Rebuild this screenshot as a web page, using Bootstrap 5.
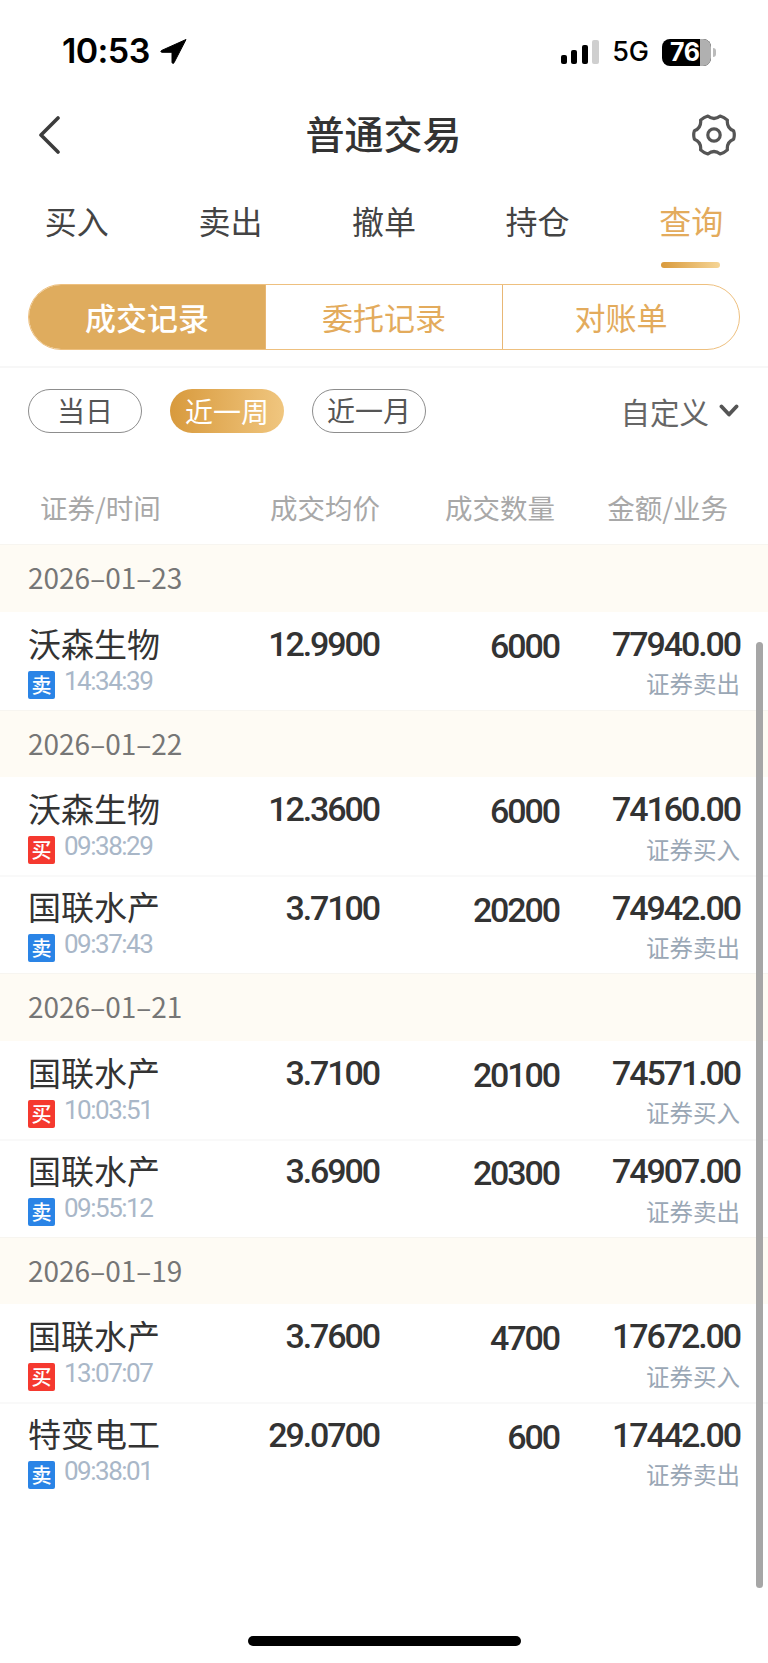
<!DOCTYPE html>
<html lang="zh-CN">
<head>
<meta charset="utf-8">
<title>普通交易</title>
<link href="https://cdn.jsdelivr.net/npm/bootstrap@5.3.0/dist/css/bootstrap.min.css" rel="stylesheet">
<style>
:root{--gold:#e3ab5c}
html,body{height:100%}
body{font-family:"Noto Sans CJK SC",sans-serif;color:#333;background:#fff;overflow:hidden}
.phone{position:relative;width:768px;height:1663px;overflow:hidden;background:#fff}
.statusbar{height:100px;padding:36px 52px 0 62px;align-items:flex-start}
.clock{font:600 34px/30px "Inter",sans-serif;color:#000;letter-spacing:-.6px}
.clock-wrap{gap:10px}
.net{font:500 27px/32px "Inter",sans-serif;color:#000;margin:0 13px}
.batt{position:relative;width:49px;height:27px;border-radius:8px;background:#000;color:#fff;font:700 25px/27px "Inter",sans-serif;padding-left:8px;letter-spacing:-.4px}
.batt-rest{position:absolute;left:38px;top:0;bottom:0;right:0;background:#b0b0b0;border-radius:0 8px 8px 0}
.batt-num{position:relative}
.batt-nub{width:3px;height:9px;margin-left:2px;background:#bbb;border-radius:0 3px 3px 0}
.topbar{height:70px;padding:0 32px 0 38px}
.bar-left{width:56px}
.bar-right{width:63px}
.page-title{font-size:39px;font-weight:500;line-height:50px;color:#333;margin:0 0 6px}
.tabbar{height:114px}
.tab-cell{flex:1 1 0;text-align:center;font-size:32px;line-height:44px;color:#444;padding-top:28px;position:relative}
.tab-cell.on{color:var(--gold)}
.tab-cell.on::after{content:"";position:absolute;left:50%;margin-left:-30px;width:59px;height:6px;top:92px;border-radius:3px;background:linear-gradient(90deg,#d99a3c,#f5d596)}
.seg{margin:0 28px;height:66px;border:1.5px solid #eec07f;border-radius:33px;overflow:hidden}
.seg-item{flex:1 1 0;display:flex;align-items:center;justify-content:center;font-size:31px;color:var(--gold);border-left:1.5px solid #e8b775}
.seg-item:first-child{border-left:0;background:#dfac5e;color:#fff;font-weight:500}
.rule{height:2px;background:#f7f7f7;margin-top:16px}
.filters{padding:21px 28px 0;height:77px}
.pill{width:114px;height:44px;border:1.5px solid #8d8d8d;border-radius:22px;font-size:28px;line-height:41px;text-align:center;color:#555;margin-right:28px}
.pill.on{border:0;line-height:44px;color:#fff;background:linear-gradient(90deg,#d89a3d,#f0c67f)}
.custom-wrap{gap:10px;margin-right:1px}
.custom{font-size:29.500px;line-height:44px;color:#666}
.table-head{display:grid;grid-template-columns:150px 190px 175px 173px;height:99px;padding:26px 0 0 40px;font-size:27.500px;color:#a8a8a8;align-items:center;white-space:nowrap}
.date-row{height:67.500px;background:#fefbf4;padding-left:28px;font-size:28px;line-height:65px;color:#767676;border-top:1px solid #f7f5f0}
.trade-row{display:grid;grid-template-columns:180px 171px 180px 181px;height:98px;padding:0 28px;border-top:2px solid #f9f9f9}
.date-row + .trade-row{border-top:0}
.who{padding-top:11px;white-space:nowrap}
.trade-row:not(.date-row + .trade-row) .who{padding-top:9px}
.who-name{font-size:33px;line-height:40px;color:#333}
.who-sub{margin-top:8px;height:28px}
.side{width:27px;height:28px;border-radius:2px;color:#fff;font-size:20px;line-height:28px;text-align:center;font-weight:500}
.side.b{background:#f5392f}
.side.s{background:#2a84e6}
.stamp{font:400 26px/20px "Roboto",sans-serif;color:#a9b7c8;margin-left:9px;letter-spacing:-1.500px}
.num-val{font:500 34px/40px "Roboto",sans-serif;color:#333;text-align:right;padding-top:12px;letter-spacing:-2.100px}
.num-val.qty{padding-top:14px}
.trade-row:not(.date-row + .trade-row) .num-val{padding-top:10.500px}
.trade-row:not(.date-row + .trade-row) .num-val.qty{padding-top:12.500px}
.money-kind{font-size:23.500px;line-height:30px;color:#9aa7b5;text-align:right;padding-top:4.500px;white-space:nowrap}
.scroller{position:absolute;left:756px;top:642px;width:7px;height:946px;border-radius:4px;background:#a6a6a6}
.home-bar{position:absolute;left:248px;top:1636px;width:273px;height:10px;border-radius:5px;background:#000}
</style>
</head>
<body>
<div class="phone">
  <div class="statusbar d-flex justify-content-between">
    <div class="clock-wrap d-flex align-items-center">
      <span class="clock">10:53</span>
      <svg width="27" height="27" viewBox="0 0 27 27"><path d="M26 1.500 1.500 12.500c-1 .5-.7 1.800.4 1.800H12v10c0 1.200 1.500 1.500 2 .5L26 1.500Z" fill="#000" stroke="#000" stroke-linejoin="round"/></svg>
    </div>
    <div class="d-flex align-items-center">
      <svg width="38" height="25" viewBox="0 0 38 25"><rect x="0" y="15" width="6" height="9" rx="2"/><rect x="10" y="10" width="6" height="14" rx="2"/><rect x="21" y="5" width="6" height="19" rx="2"/><rect x="31" y="0" width="7" height="24" rx="2" fill="#cfcfcf"/></svg>
      <span class="net">5G</span>
      <div class="batt"><span class="batt-rest"></span><span class="batt-num">76</span></div>
      <span class="batt-nub"></span>
    </div>
  </div>

  <nav class="topbar d-flex align-items-center justify-content-between">
    <div class="bar-left d-flex"><svg width="22" height="38" viewBox="0 0 22 38"><path d="M20 2 3 19l17 17" fill="none" stroke="#3c3c3c" stroke-width="3.600" stroke-linecap="round" stroke-linejoin="round"/></svg></div>
    <h1 class="page-title">普通交易</h1>
    <div class="bar-right d-flex justify-content-end"><svg width="44" height="42" viewBox="0 0 44 42"><path d="M41.600 16.800Q43 21 41.600 25.200Q34.500 28 35.400 35.900Q32 39 28.200 40Q22 35 15.800 40Q12 39 8.600 35.900Q9.500 28 2.400 25.200Q1 21 2.400 16.800Q9.500 14 8.600 6.100Q12 3 15.800 2Q22 7 28.200 2Q32 3 35.400 6.100Q34.500 14 41.600 16.800Z" fill="none" stroke="#555" stroke-width="3.200" stroke-linejoin="round"/><circle cx="22" cy="21" r="6.200" fill="none" stroke="#555" stroke-width="3.200"/></svg></div>
  </nav>

  <div class="tabbar d-flex">
    <div class="tab-cell">买入</div>
    <div class="tab-cell">卖出</div>
    <div class="tab-cell">撤单</div>
    <div class="tab-cell">持仓</div>
    <div class="tab-cell on">查询</div>
  </div>

  <div class="seg d-flex">
    <div class="seg-item">成交记录</div>
    <div class="seg-item">委托记录</div>
    <div class="seg-item">对账单</div>
  </div>
  <div class="rule"></div>

  <div class="filters d-flex align-items-start">
    <div class="pill">当日</div>
    <div class="pill on">近一周</div>
    <div class="pill">近一月</div>
    <div class="custom-wrap ms-auto d-flex align-items-center">
      <span class="custom">自定义</span>
      <svg width="20" height="14" viewBox="0 0 20 14"><path d="M2.500 2.500 10 10.500l7.500-8" fill="none" stroke="#555" stroke-width="3.800" stroke-linecap="round" stroke-linejoin="round"/></svg>
    </div>
  </div>

  <div class="table-head">
    <div>证券/时间</div>
    <div class="text-end">成交均价</div>
    <div class="text-end">成交数量</div>
    <div class="text-end">金额/业务</div>
  </div>

  <div class="date-row">2026–01–23</div>
  <div class="trade-row">
    <div class="who"><div class="who-name">沃森生物</div><div class="who-sub d-flex"><span class="side s">卖</span><span class="stamp">14:34:39</span></div></div>
    <div class="num-val">12.9900</div>
    <div class="num-val qty">6000</div>
    <div><div class="num-val">77940.00</div><div class="money-kind">证券卖出</div></div>
  </div>

  <div class="date-row">2026–01–22</div>
  <div class="trade-row">
    <div class="who"><div class="who-name">沃森生物</div><div class="who-sub d-flex"><span class="side b">买</span><span class="stamp">09:38:29</span></div></div>
    <div class="num-val">12.3600</div>
    <div class="num-val qty">6000</div>
    <div><div class="num-val">74160.00</div><div class="money-kind">证券买入</div></div>
  </div>
  <div class="trade-row">
    <div class="who"><div class="who-name">国联水产</div><div class="who-sub d-flex"><span class="side s">卖</span><span class="stamp">09:37:43</span></div></div>
    <div class="num-val">3.7100</div>
    <div class="num-val qty">20200</div>
    <div><div class="num-val">74942.00</div><div class="money-kind">证券卖出</div></div>
  </div>

  <div class="date-row">2026–01–21</div>
  <div class="trade-row">
    <div class="who"><div class="who-name">国联水产</div><div class="who-sub d-flex"><span class="side b">买</span><span class="stamp">10:03:51</span></div></div>
    <div class="num-val">3.7100</div>
    <div class="num-val qty">20100</div>
    <div><div class="num-val">74571.00</div><div class="money-kind">证券买入</div></div>
  </div>
  <div class="trade-row">
    <div class="who"><div class="who-name">国联水产</div><div class="who-sub d-flex"><span class="side s">卖</span><span class="stamp">09:55:12</span></div></div>
    <div class="num-val">3.6900</div>
    <div class="num-val qty">20300</div>
    <div><div class="num-val">74907.00</div><div class="money-kind">证券卖出</div></div>
  </div>

  <div class="date-row">2026–01–19</div>
  <div class="trade-row">
    <div class="who"><div class="who-name">国联水产</div><div class="who-sub d-flex"><span class="side b">买</span><span class="stamp">13:07:07</span></div></div>
    <div class="num-val">3.7600</div>
    <div class="num-val qty">4700</div>
    <div><div class="num-val">17672.00</div><div class="money-kind">证券买入</div></div>
  </div>
  <div class="trade-row">
    <div class="who"><div class="who-name">特变电工</div><div class="who-sub d-flex"><span class="side s">卖</span><span class="stamp">09:38:01</span></div></div>
    <div class="num-val">29.0700</div>
    <div class="num-val qty">600</div>
    <div><div class="num-val">17442.00</div><div class="money-kind">证券卖出</div></div>
  </div>

  <div class="scroller"></div>
  <div class="home-bar"></div>
</div>
</body>
</html>
